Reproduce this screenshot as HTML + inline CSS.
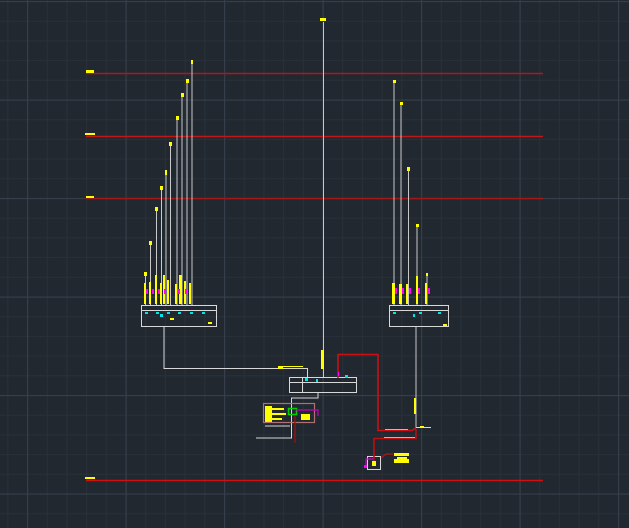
<!DOCTYPE html>
<html><head><style>html,body{margin:0;padding:0;background:#212830;overflow:hidden}svg{display:block}</style></head>
<body>
<svg width="629" height="528" xmlns="http://www.w3.org/2000/svg">
<defs>
<pattern id="mn" x="27" y="1" width="19.7" height="19.7" patternUnits="userSpaceOnUse">
<path d="M0.5 0V19.7M0 0.5H19.7" stroke="#29303a" stroke-width="1" fill="none"/></pattern>
<pattern id="mj" x="27" y="1" width="98.5" height="98.5" patternUnits="userSpaceOnUse">
<path d="M0.5 0V98.5M0 0.5H98.5" stroke="#353e4b" stroke-width="1.3" fill="none"/></pattern>
</defs>
<rect width="629" height="528" fill="#212830"/>
<rect width="629" height="528" fill="url(#mn)"/>
<rect width="629" height="528" fill="url(#mj)"/>
<!-- red level lines -->
<g stroke-width="1.5">
<line x1="86" y1="73.5" x2="543" y2="73.5" stroke="#b01818"/>
<line x1="86" y1="136.5" x2="543" y2="136.5" stroke="#c01818"/>
<line x1="86" y1="198.5" x2="543" y2="198.5" stroke="#a01818"/>
<line x1="86" y1="480.5" x2="543" y2="480.5" stroke="#d01010"/>
</g>
<g fill="#ffff00">
<rect x="86" y="70" width="8" height="3"/><rect x="85" y="133" width="10" height="2"/>
<rect x="86" y="196" width="8" height="2"/><rect x="85" y="477" width="10" height="2"/>
</g>
<!-- left risers -->
<g stroke="#c8c8c8" stroke-width="1">
<line x1="145.5" y1="275" x2="145.5" y2="305"/><line x1="150.5" y1="245" x2="150.5" y2="305"/>
<line x1="156.5" y1="211" x2="156.5" y2="305"/><line x1="161.5" y1="190" x2="161.5" y2="305"/>
<line x1="166" y1="173" x2="166" y2="305"/><line x1="170.5" y1="146" x2="170.5" y2="305"/>
<line x1="177" y1="120" x2="177" y2="305"/><line x1="182" y1="97" x2="182" y2="305"/>
<line x1="187" y1="82" x2="187" y2="305"/><line x1="192" y1="63" x2="192" y2="305"/>
<line x1="394" y1="82" x2="394" y2="305"/><line x1="401" y1="104" x2="401" y2="305"/>
<line x1="408.5" y1="170" x2="408.5" y2="305"/><line x1="417" y1="227" x2="417" y2="305"/>
<line x1="427" y1="275" x2="427" y2="305"/>
<line x1="323.5" y1="22" x2="323.5" y2="378"/>
<line x1="416" y1="327" x2="416" y2="428"/>
</g>
<g fill="#ffff00">
<rect x="144" y="272" width="3" height="4"/><rect x="149" y="241" width="3" height="4"/>
<rect x="155" y="207" width="3" height="4"/><rect x="160" y="186" width="3" height="4"/>
<rect x="165" y="170" width="2" height="5"/><rect x="169" y="142" width="3" height="4"/>
<rect x="176" y="116" width="3" height="4"/><rect x="181" y="93" width="3" height="4"/>
<rect x="186" y="79" width="3" height="4"/><rect x="191" y="60" width="2" height="4"/>
<rect x="393" y="80" width="3" height="3"/><rect x="400" y="102" width="3" height="3"/>
<rect x="407" y="167" width="3" height="4"/><rect x="416" y="224" width="3" height="3"/>
<rect x="426" y="273" width="2" height="3"/>
<rect x="320" y="18" width="6" height="3"/>
<!-- bottom yellow bars left -->
<rect x="144" y="283" width="2" height="21"/><rect x="149" y="282" width="2" height="22"/>
<rect x="155" y="275" width="2" height="29"/><rect x="160" y="283" width="2" height="21"/>
<rect x="163" y="275" width="2" height="29"/><rect x="167" y="280" width="2" height="24"/>
<rect x="175" y="284" width="2" height="20"/><rect x="179" y="275" width="3" height="29"/>
<rect x="184" y="281" width="2" height="23"/><rect x="189" y="283" width="2" height="21"/>
<rect x="392" y="283" width="3" height="21"/><rect x="399" y="284" width="3" height="20"/>
<rect x="406" y="284" width="2" height="20"/><rect x="416" y="276" width="2" height="28"/>
<rect x="425" y="283" width="2" height="21"/>
<rect x="321" y="350" width="3" height="19"/>
<rect x="414" y="398" width="2" height="16"/>
</g>
<g fill="#ff00ff">
<rect x="146" y="289" width="2" height="5"/><rect x="152" y="289" width="2" height="5"/>
<rect x="158" y="289" width="2" height="5"/><rect x="164" y="289" width="2" height="5"/>
<rect x="178" y="289" width="2" height="5"/><rect x="185" y="289" width="2" height="5"/>
<rect x="395" y="288" width="2" height="6"/><rect x="402" y="288" width="2" height="6"/>
<rect x="409" y="288" width="2" height="6"/><rect x="418" y="288" width="2" height="6"/>
<rect x="428" y="288" width="2" height="6"/>
</g>
<!-- boxes -->
<g fill="none" stroke="#d8d8d8" stroke-width="1">
<rect x="141.5" y="305.5" width="75" height="21"/><line x1="141" y1="310.5" x2="217" y2="310.5"/>
<rect x="389.5" y="305.5" width="59" height="21"/><line x1="389" y1="310.5" x2="449" y2="310.5"/>
<rect x="289.5" y="377.5" width="67" height="15"/><line x1="289" y1="382.5" x2="357" y2="382.5"/>
<line x1="302.5" y1="377" x2="302.5" y2="393"/>
<polyline points="164,327 164,368.5 307.5,368.5 307.5,377"/>
<polyline points="318,393 318,398 291.5,398 291.5,438 256,438"/>
<polyline points="290,426 265,426"/>
<rect x="367.5" y="456.5" width="13" height="13"/>
<line x1="416" y1="427.5" x2="431" y2="427.5"/>
</g>
<g fill="#00e5e5">
<rect x="145" y="312" width="3" height="2"/><rect x="156" y="312" width="3" height="2"/><rect x="167" y="312" width="3" height="2"/>
<rect x="178" y="312" width="3" height="2"/><rect x="190" y="312" width="3" height="2"/><rect x="202" y="312" width="3" height="2"/>
<rect x="393" y="312" width="3" height="2"/><rect x="419" y="312" width="3" height="2"/><rect x="438" y="312" width="3" height="2"/>
<rect x="160" y="314" width="3" height="3"/><rect x="413" y="314" width="2" height="3"/>
<rect x="305" y="378" width="3" height="3"/><rect x="345" y="375" width="3" height="3"/>
<rect x="316" y="379" width="2" height="3"/>
</g>
<g fill="#ffff00">
<rect x="208" y="322" width="4" height="2"/><rect x="443" y="324" width="4" height="2"/>
<rect x="170" y="318" width="4" height="2"/><rect x="278" y="366" width="5" height="3"/>
<rect x="283" y="366" width="20" height="1"/>
<!-- legend block -->
<rect x="265" y="406" width="7" height="16"/><rect x="272" y="408" width="12" height="2"/>
<rect x="272" y="413" width="14" height="2"/><rect x="272" y="418" width="10" height="2"/>
<rect x="301" y="414" width="9" height="6"/>
<rect x="394" y="453" width="15" height="3"/><rect x="397" y="457" width="10" height="2"/>
<rect x="394" y="459" width="15" height="4"/>
<rect x="385" y="429" width="23" height="1"/><rect x="384" y="437" width="31" height="1"/>
<rect x="420" y="426" width="4" height="2"/>
</g>
<rect x="263.5" y="403.5" width="51" height="19" fill="none" stroke="#b07070" stroke-width="1.2"/>
<rect x="288.5" y="408.5" width="8" height="6" fill="none" stroke="#00d000" stroke-width="1.5"/>
<g fill="none" stroke-width="1.2">
<polyline points="296,410 318,410 318,416" stroke="#c000c0"/>
<line x1="295" y1="416" x2="295" y2="443" stroke="#a01010"/>
<polyline points="338,378 338,354.5 378,354.5 378,430.5 412,430.5 416,428" stroke="#d01010" stroke-width="1.5"/>
<polyline points="416,429 416,438.5 374,438.5 374,464" stroke="#c01010" stroke-width="1.5"/>
<polyline points="381,458 386,454 393,454" stroke="#c01010"/>
<polyline points="366,468 366,459 373,459" stroke="#d000d0"/>
</g>
<rect x="364" y="465" width="3" height="3" fill="#ff00ff"/>
<rect x="372" y="461" width="4" height="5" fill="#ffff00"/>
<rect x="338" y="372" width="1" height="4" fill="#ff00ff"/>
</svg>
</body></html>
